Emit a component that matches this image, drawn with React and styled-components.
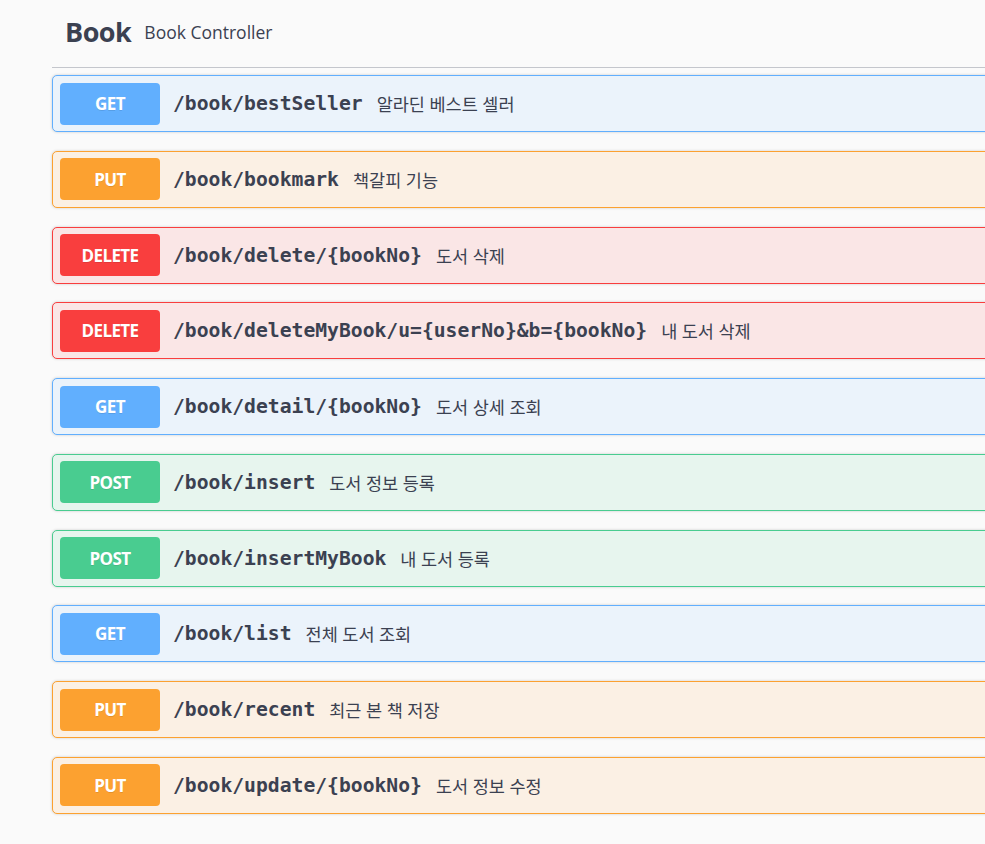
import React from "react";
import styled, { createGlobalStyle } from "styled-components";

const Global = createGlobalStyle`
  html, body { margin: 0; padding: 0; background: #fafafa; overflow: hidden; }
  body { width: 985px; height: 844px; }
`;

const METHODS = {
  GET: { main: "#61affe", bg: "#ebf3fb" },
  PUT: { main: "#fca130", bg: "#fbf0e4" },
  DELETE: { main: "#f93e3e", bg: "#fae6e6" },
  POST: { main: "#49cc90", bg: "#e7f5ee" },
};

const Section = styled.section`
  margin-left: 52px;
  width: 1100px;
`;

const TagHeader = styled.h3`
  margin: 0 0 6px;
  height: 68px;
  box-sizing: border-box;
  display: flex;
  align-items: center;
  gap: 13px;
  padding: 0 20px 4px 13px;
  border-bottom: 1px solid #c4c6cc;
  color: #3b4151;
`;

const TagName = styled.span`
  font-family: "Open Sans", "Noto Sans", sans-serif;
  font-weight: 700;
  font-size: 27px;
  letter-spacing: -0.5px;
`;

const TagDesc = styled.small`
  font-family: "Open Sans", "Noto Sans", sans-serif;
  font-weight: 400;
  font-size: 17.5px;
`;

const List = styled.div`
  display: flex;
  flex-direction: column;
  gap: 18.75px;
  padding-top: 1px;
`;

const Op = styled.div`
  display: flex;
  align-items: center;
  height: 57px;
  box-sizing: border-box;
  padding: 0 7px;
  border: 1px solid ${(p) => METHODS[p.$m].main};
  background: ${(p) => METHODS[p.$m].bg};
  border-radius: 5px;
  box-shadow: 0 0 3px rgba(0, 0, 0, 0.19);
`;

const Badge = styled.span`
  flex: none;
  width: 100px;
  height: 42px;
  display: flex;
  align-items: center;
  justify-content: center;
  border-radius: 4px;
  background: ${(p) => METHODS[p.$m].main};
  color: #fff;
  font-family: "Open Sans", "Noto Sans", sans-serif;
  font-weight: 700;
  font-size: 17px;
  letter-spacing: -0.6px;
  text-shadow: 0 1px 0 rgba(0, 0, 0, 0.1);
`;

const Path = styled.span`
  padding: 0 14px 0 13px;
  font-family: "DejaVu Sans Mono", "Liberation Mono", monospace;
  font-weight: 700;
  font-size: 19.7px;
  color: #3b4151;
  white-space: nowrap;
`;

const Desc = styled.span`
  font-family: "Open Sans", "Noto Sans CJK KR", sans-serif;
  font-size: 17.5px;
  color: #3b4151;
  white-space: nowrap;
`;

const ops = [
  ["GET", "/book/bestSeller", "알라딘 베스트 셀러"],
  ["PUT", "/book/bookmark", "책갈피 기능"],
  ["DELETE", "/book/delete/{bookNo}", "도서 삭제"],
  ["DELETE", "/book/deleteMyBook/u={userNo}&b={bookNo}", "내 도서 삭제"],
  ["GET", "/book/detail/{bookNo}", "도서 상세 조회"],
  ["POST", "/book/insert", "도서 정보 등록"],
  ["POST", "/book/insertMyBook", "내 도서 등록"],
  ["GET", "/book/list", "전체 도서 조회"],
  ["PUT", "/book/recent", "최근 본 책 저장"],
  ["PUT", "/book/update/{bookNo}", "도서 정보 수정"],
];

export default function App() {
  return (
    <>
      <Global />
      <Section>
        <TagHeader>
          <TagName>Book</TagName>
          <TagDesc>Book Controller</TagDesc>
        </TagHeader>
        <List>
          {ops.map(([m, p, d]) => (
            <Op key={p} $m={m}>
              <Badge $m={m}>{m}</Badge>
              <Path>{p}</Path>
              <Desc>{d}</Desc>
            </Op>
          ))}
        </List>
      </Section>
    </>
  );
}
